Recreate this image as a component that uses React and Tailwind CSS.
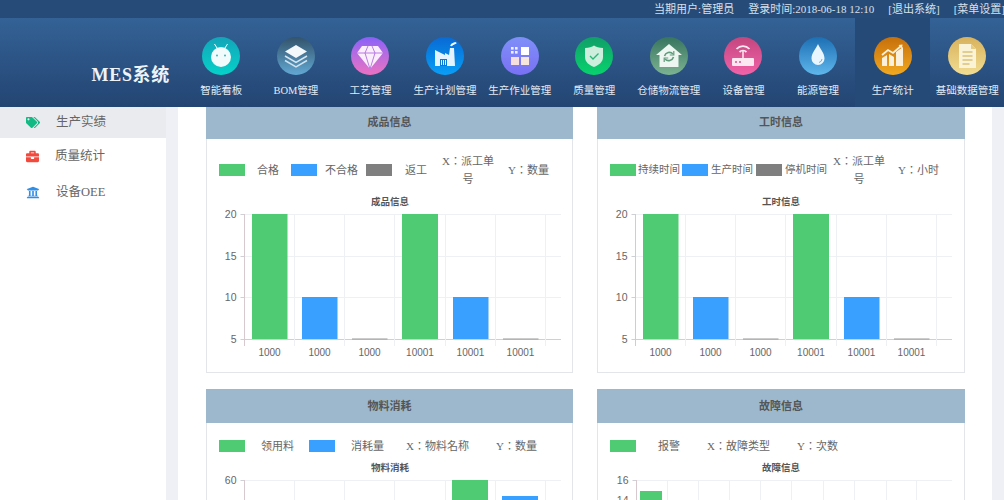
import React from "react";
import { FaTags, FaBriefcase, FaUniversity } from "react-icons/fa";

const W = "#ffffff";
const icons = {
  android: (
    <>
      <path d="M12.500 7l2.500 4M25.500 7L23 11" stroke={W} strokeWidth="1" />
      <ellipse cx="19" cy="20" rx="10" ry="10" fill="#f2fbfb" />
      <circle cx="15" cy="18.500" r="0.9" fill="#19b4c0" />
      <circle cx="23" cy="18.500" r="0.9" fill="#19b4c0" />
    </>
  ),
  layers: (
    <>
      <path d="M19 8l11 6.500L19 21 8 14.500z" fill="#f3f8fb" />
      <path d="M8 19l11 6.500L30 19" fill="none" stroke="#d5e6f0" strokeWidth="1.500" />
      <path d="M8 23.500L19 30l11-6.500" fill="none" stroke="#cfe2ee" strokeWidth="1.500" />
    </>
  ),
  diamond: (
    <>
      <path d="M11 9h16l5 7-13 16L6 16z" fill="#fbeefc" />
      <path d="M6 16h26M14 16l5 16 5-16M14 16l3-7M24 16l-3-7" stroke="#b06ee0" strokeWidth="0.9" fill="none" />
    </>
  ),
  factory: (
    <>
      <path d="M9 13l10 5v-2l4 2 1-7h4l1 18H9z" fill="#e4f3fd" />
      <path d="M25 9c1-3 4-2 5-3.500" stroke={W} strokeWidth="2" fill="none" />
      <path d="M14 22h7v7h-7z" fill="#0b78d8" />
      <path d="M15.500 23v5M17.500 23v5M19.500 23v5" stroke="#e4f3fd" strokeWidth="1" />
    </>
  ),
  grid: (
    <>
      <g fill="#eef0ff">
        <rect x="10" y="10" width="2.600" height="2.600" />
        <rect x="14" y="10" width="2.600" height="2.600" />
        <rect x="10" y="14" width="2.600" height="2.600" />
        <rect x="14" y="14" width="2.600" height="2.600" />
      </g>
      <rect x="20" y="10" width="8" height="8" fill="#fff" />
      <rect x="10" y="20" width="8" height="8" fill="#f7dede" />
      <rect x="20" y="20" width="8" height="8" fill="#f7e6dc" />
    </>
  ),
  shield: (
    <>
      <path d="M10 11c4 0 7-1 9-2.500 2 1.500 5 2.500 9 2.500v9c0 5-4 8-9 10-5-2-9-5-9-10z" fill="#cdeedd" />
      <path d="M15 19l3 3 5.500-5.500" stroke="#28b877" strokeWidth="1.300" fill="none" />
    </>
  ),
  house: (
    <>
      <path d="M19 7L6 18h3.500v12h19V18H32z" fill="#eef6f1" />
      <path d="M14.500 19a5 5 0 0 1 8.500-2M23.500 20a5 5 0 0 1-8.500 2" stroke="#5f9c7c" strokeWidth="1.600" fill="none" />
      <path d="M23.800 14v4h-4M14.200 25v-4h4" stroke="#5f9c7c" strokeWidth="1.200" fill="none" />
    </>
  ),
  router: (
    <>
      <rect x="8" y="21" width="22" height="8" rx="1" fill="#fbe8f1" />
      <circle cx="12" cy="25" r="1" fill="#d9538f" />
      <circle cx="16" cy="25" r="1" fill="#d9538f" />
      <path d="M19 21v-7" stroke="#fbe8f1" strokeWidth="1.500" />
      <path d="M15.500 15a5 5 0 0 1 7 0M12.500 12a9 9 0 0 1 13 0" stroke="#fbe8f1" strokeWidth="1.800" fill="none" />
    </>
  ),
  drop: (
    <>
      <path d="M19 7c2 5 6.500 9 6.500 14.500a6.500 6.500 0 0 1-13 0C12.500 16 17 12 19 7z" fill="#eaf6fd" />
      <path d="M23 22a4 4 0 0 1-3 3.500" stroke="#6eb4e0" strokeWidth="1" fill="none" />
    </>
  ),
  chart: (
    <>
      <path d="M8 29v-8l5-3v11zM15 29V17l5 3v9zM22 29V15l7-5v19z" fill="#fbf0dc" />
      <path d="M8 18l6-5 5 3 8-7" stroke="#fbf0dc" strokeWidth="1.800" fill="none" />
      <path d="M24.500 8l4-.500-.500 4z" fill="#fbf0dc" />
    </>
  ),
  doc: (
    <>
      <path d="M11 7h12l5 5v19H11z" fill="#fbf3d5" />
      <path d="M23 7l5 5h-5z" fill="#e5cc85" />
      <path d="M14.500 15h10M14.500 19h10M14.500 23h10M14.500 27h7" stroke="#dcc27c" strokeWidth="1.300" />
    </>
  ),
};

const nav = [
  ["智能看板", "android", "from-[#12a5b9] to-[#04d2c9]"],
  ["BOM管理", "layers", "from-[#33536b] to-[#62a9d4]"],
  ["工艺管理", "diamond", "from-[#8a5ff8] to-[#ec70c0]"],
  ["生产计划管理", "factory", "from-[#0a6ad4] to-[#0a9ff7]"],
  ["生产作业管理", "grid", "from-[#7f8ff8] to-[#7a70f4]"],
  ["质量管理", "shield", "from-[#0f9f68] to-[#07d36c]"],
  ["仓储物流管理", "house", "from-[#37755f] to-[#7cb392]"],
  ["设备管理", "router", "from-[#c4467f] to-[#f262a8]"],
  ["能源管理", "drop", "from-[#1b6fb3] to-[#5fb7ec]"],
  ["生产统计", "chart", "from-[#c66f0a] to-[#f2a91f]"],
  ["基础数据管理", "doc", "from-[#d8b25c] to-[#f1dd92]"],
];

const serif = "font-['Liberation_Serif','Noto_Sans_CJK_SC',serif]";
const tc = "font-['Liberation_Serif','Noto_Sans_CJK_TC',serif]";

function Swatch({ c, className = "" }) {
  return <span className={`block h-[12px] w-[26px] shrink-0 ${c} ${className}`} />;
}

const G = "bg-[#4ecb73]";
const B = "bg-[#3aa0ff]";
const K = "bg-[#7f7f7f]";

function Chart({ x0, height, title, ys, xs, right, top, bars, bottom, y0, labels, axisEnd }) {
  return (
    <svg width="366" height={height} viewBox={`${x0} ${y0} 366 ${height}`} className="block">
      <text x={x0 + 183} y={y0 + 12} textAnchor="middle" fontSize="9.500" fontWeight="700" fill="#555" fontFamily="'Liberation Sans','Noto Sans CJK SC',sans-serif">{title}</text>
      {ys.map(([v, y]) => (
        <g key={v}>
          <line x1={xs[0]} x2={right} y1={y} y2={y} stroke={y === bottom ? "#cfcfd6" : "#eef0f3"} />
          <line x1={xs[0] - 4} x2={xs[0]} y1={y} y2={y} stroke="#cfcfd6" />
          <text x={xs[0] - 8} y={y + 3.500} textAnchor="end" fontSize="10.500" fill="#666" fontFamily="'Liberation Sans',sans-serif">{v}</text>
        </g>
      ))}
      {xs.slice(1).map((x) => (
        <line key={x} x1={x} x2={x} y1={top} y2={axisEnd} stroke="#eef0f3" />
      ))}
      <line x1={xs[0]} x2={xs[0]} y1={top} y2={axisEnd} stroke="#d8c9cf" />
      {bars.map(([x, w, y, h, c], i) => (
        <rect key={i} x={x} width={w} y={y} height={h} fill={c} />
      ))}
      {labels && labels.map(([t, x]) => (
        <text key={x} x={x} y={355.500} textAnchor="middle" fontSize="10" fill="#666" fontFamily="'Liberation Sans',sans-serif">{t}</text>
      ))}
    </svg>
  );
}

const gs = "#4ecb73", bs = "#3aa0ff", ks = "#9a9a9a";
const upperBars = (o) => [
  [252 + o, 35.500, 214, 125, gs],
  [302 + o, 35.500, 297, 42, bs],
  [352 + o, 35.500, 338.500, 1, ks],
  [402 + o, 36, 214, 125, gs],
  [453 + o, 35.500, 297, 42, bs],
  [503 + o, 35.500, 338.500, 1, ks],
];
const upperLabels = (o) => [
  ["1000", 269.500 + o], ["1000", 319.500 + o], ["1000", 369.500 + o],
  ["10001", 420 + o], ["10001", 470.500 + o], ["10001", 520.500 + o],
];
const upperX = (o) => [244.500, 294.500, 344.500, 394.500, 445.500, 495.500, 545.500].map((x) => x + o);
const upperY = [[20, 214.500], [15, 256.500], [10, 297.500], [5, 339.500]];

function Card({ title, legend, children }) {
  return (
    <div className="border border-t-0 border-[#e2e5e9] bg-white">
      <div className="-mx-px flex h-[34px] items-center justify-center bg-[#9db8cd] text-[11px] font-bold text-[#555]">{title}</div>
      {legend}
      {children}
    </div>
  );
}

function L({ children, className = "" }) {
  return <span className={`block shrink-0 leading-[18px] ${className}`}>{children}</span>;
}

export default function App() {
  return (
    <div className={`flex h-[500px] w-[1004px] flex-col overflow-hidden bg-white ${serif}`}>
      <header className="relative z-10 shrink-0">
        <div className="-mr-[1px] flex h-[18px] items-center justify-end gap-[14px] bg-[#274b78] text-[11px] whitespace-nowrap text-[#d7e0ea]">
          <span>当期用户:管理员</span>
          <span>登录时间:2018-06-18 12:10</span>
          <span>[退出系统]</span>
          <span>[菜单设置]</span>
        </div>
        <div className="flex h-[89px] bg-linear-to-b from-[#346296] to-[#234573]">
          <div className="flex w-[184px] shrink-0 items-end justify-end pr-[14px] pb-[21px] text-[18px] leading-[22px] font-bold tracking-[0.7px] whitespace-nowrap text-[#eef3f8]">
            MES系统
          </div>
          {nav.map(([label, ic, grad]) => (
            <div key={label} className={`flex w-[74.6px] shrink-0 flex-col items-center pt-[19px] ${label === "生产统计" ? "bg-[#264a78]" : ""}`}>
              <div className={`h-[38px] w-[38px] rounded-full bg-linear-to-b ${grad}`}>
                <svg width="38" height="38" viewBox="0 0 38 38">{icons[ic]}</svg>
              </div>
              <span className="mt-[9px] text-[10.5px] leading-[14px] whitespace-nowrap text-[#e3eaf2]">{label}</span>
            </div>
          ))}
        </div>
      </header>

      <div className="flex min-h-0 flex-1 bg-[#eef0f5]">
        <aside className="w-[166px] shrink-0 overflow-hidden bg-white text-[12.500px] text-[#666]">
          <div className="-mt-[4px]">
            <div className="flex h-[35px] items-center bg-[#e9ebef] pt-[4px]">
              <FaTags className="ml-[26px] h-[13px] w-[14px] text-[#13b983]" />
              <span className="ml-[16px]">生产实绩</span>
            </div>
            <div className="flex h-[36px] items-center pt-[1px]">
              <FaBriefcase className="ml-[26px] h-[13px] w-[13px] text-[#f2493c]" />
              <span className="ml-[16px]">质量统计</span>
            </div>
            <div className="flex h-[36px] items-center pt-[1px]">
              <FaUniversity className="ml-[26px] h-[13px] w-[14px] text-[#2f8fe8]" />
              <span className="ml-[16px]">设备OEE</span>
            </div>
          </div>
        </aside>

        <main className="ml-[12px] w-[814px] shrink-0 overflow-hidden bg-white pl-[28px]">
          <div className="-mt-[2px] grid grid-cols-[367px_368px] gap-x-[24px] gap-y-[16px] text-[11px] text-[#666]">
            <Card
              title="成品信息"
              legend={
                <div className="flex h-[54px] items-center pt-[8px] pl-[12px] text-center">
                  <Swatch c={G} />
                  <L className="ml-[12px] whitespace-nowrap">合格</L>
                  <Swatch c={B} className="ml-[12px]" />
                  <L className="ml-[8px] whitespace-nowrap">不合格</L>
                  <Swatch c={K} className="ml-[8px]" />
                  <L className="ml-[13px] whitespace-nowrap">返工</L>
                  <L className={`ml-[14px] w-[54px] ${tc}`}>X：派工单号</L>
                  <L className={`ml-[13px] ${tc}`}>Y：数量</L>
                </div>
              }
            >
              <Chart x0={207} y0={193} height={179} title="成品信息" ys={upperY} xs={upperX(0)} right={561} top={214} bottom={339.500} axisEnd={346} bars={upperBars(0)} labels={upperLabels(0)} />
            </Card>
            <Card
              title="工时信息"
              legend={
                <div className="flex h-[54px] items-center pt-[8px] pl-[12px] text-center">
                  <Swatch c={G} />
                  <L className="ml-[2px] text-[10.5px] whitespace-nowrap">持续时间</L>
                  <Swatch c={B} className="ml-[2px]" />
                  <L className="ml-[3px] text-[10.5px] whitespace-nowrap">生产时间</L>
                  <Swatch c={K} className="ml-[3px]" />
                  <L className="ml-[3px] text-[10.5px] whitespace-nowrap">停机时间</L>
                  <L className={`ml-[5px] w-[54px] ${tc}`}>X：派工单号</L>
                  <L className={`ml-[12px] ${tc}`}>Y：小时</L>
                </div>
              }
            >
              <Chart x0={598} y0={193} height={179} title="工时信息" ys={upperY} xs={upperX(391)} right={952} top={214} bottom={339.500} axisEnd={346} bars={upperBars(391)} labels={upperLabels(391)} />
            </Card>
            <Card
              title="物料消耗"
              legend={
                <div className="flex h-[36px] items-center pt-[9px] pl-[12px]">
                  <Swatch c={G} />
                  <L className="ml-[16px]">领用料</L>
                  <Swatch c={B} className="ml-[15px]" />
                  <L className="ml-[16px]">消耗量</L>
                  <L className={`ml-[22px] ${tc}`}>X：物料名称</L>
                  <L className={`ml-[27px] ${tc}`}>Y：数量</L>
                </div>
              }
            >
              <Chart x0={207} y0={459} height={60} title="物料消耗" ys={[[60, 480.500]]} xs={upperX(0)} right={561} top={480} bottom={600} axisEnd={520} bars={[[452, 36, 480, 40, gs], [502, 36, 496, 24, bs]]} />
            </Card>
            <Card
              title="故障信息"
              legend={
                <div className="flex h-[36px] items-center pt-[9px] pl-[12px]">
                  <Swatch c={G} />
                  <L className="ml-[22px]">报警</L>
                  <L className={`ml-[27px] ${tc}`}>X：故障类型</L>
                  <L className={`ml-[27px] ${tc}`}>Y：次数</L>
                </div>
              }
            >
              <Chart x0={598} y0={459} height={60} title="故障信息" ys={[[16, 480.500], [14, 500.500]]} xs={[636.500, 667.500, 698.500, 729.500, 760.500, 791.500, 823.500, 854.500, 886.500, 916.500]} right={952} top={480} bottom={600} axisEnd={520} bars={[[640, 22, 491, 30, gs]]} />
            </Card>
          </div>
        </main>
      </div>
    </div>
  );
}
